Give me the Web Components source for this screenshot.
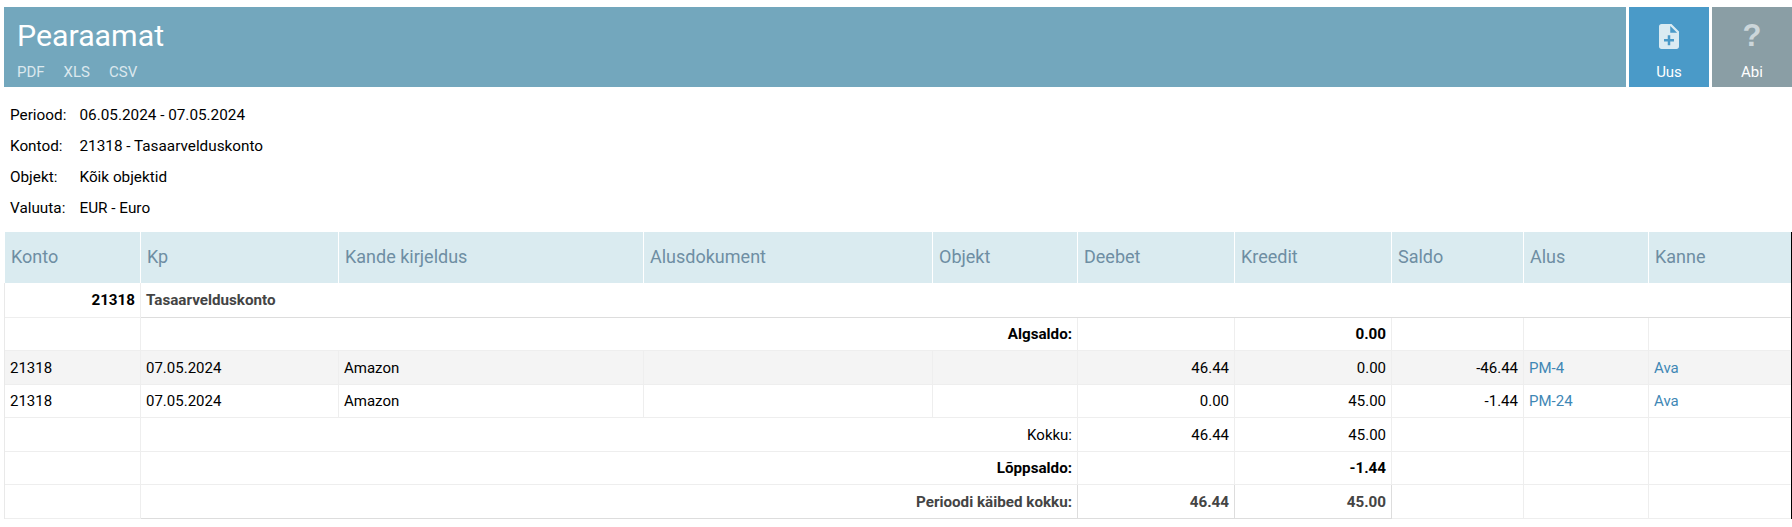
<!DOCTYPE html>
<html lang="et">
<head>
<meta charset="utf-8">
<title>Pearaamat</title>
<style>
  html, body { margin: 0; background: #fff; }
  body { font-family: Roboto, "Liberation Sans", sans-serif; font-size: 14px; color: #000; }
</style>
</head>
<body>
<gl-page>
  <gl-topbar slot="top" heading="Pearaamat">
    <gl-export>PDF</gl-export>
    <gl-export>XLS</gl-export>
    <gl-export>CSV</gl-export>
    <gl-action slot="actions" kind="new" label="Uus">
      <svg width="20" height="25" viewBox="4 2 16 20" fill="#daebf2"><path d="M14 2H6c-1.1 0-1.99.9-1.99 2L4 20c0 1.1.89 2 1.99 2H18c1.1 0 2-.9 2-2V8l-6-6zm2 14h-3v3h-2v-3H8v-2h3v-3h2v3h3v2zm-3-7V3.5L18.5 9H13z"/></svg>
    </gl-action>
    <gl-action slot="actions" kind="help" label="Abi"><span>?</span></gl-action>
  </gl-topbar>

  <gl-filters>
    <gl-filter label="Periood:">06.05.2024 - 07.05.2024</gl-filter>
    <gl-filter label="Kontod:">21318 - Tasaarvelduskonto</gl-filter>
    <gl-filter label="Objekt:">Kõik objektid</gl-filter>
    <gl-filter label="Valuuta:">EUR - Euro</gl-filter>
  </gl-filters>

  <gl-table>
    <gl-row head>
      <gl-th>Konto</gl-th><gl-th>Kp</gl-th><gl-th>Kande kirjeldus</gl-th><gl-th>Alusdokument</gl-th><gl-th>Objekt</gl-th>
      <gl-th>Deebet</gl-th><gl-th>Kreedit</gl-th><gl-th>Saldo</gl-th><gl-th>Alus</gl-th><gl-th last>Kanne</gl-th>
    </gl-row>

    <gl-row height="35">
      <gl-td right bold>21318</gl-td>
      <gl-td span="9" bold dim strong nosep>Tasaarvelduskonto</gl-td>
    </gl-row>

    <gl-row height="33">
      <gl-td></gl-td>
      <gl-td span="4" right bold>Algsaldo:</gl-td>
      <gl-td></gl-td>
      <gl-td right bold>0.00</gl-td>
      <gl-td></gl-td><gl-td></gl-td><gl-td nosep></gl-td>
    </gl-row>

    <gl-row height="34" striped>
      <gl-td>21318</gl-td><gl-td>07.05.2024</gl-td><gl-td>Amazon</gl-td><gl-td></gl-td><gl-td></gl-td>
      <gl-td right>46.44</gl-td><gl-td right>0.00</gl-td><gl-td right>-46.44</gl-td>
      <gl-td link>PM-4</gl-td><gl-td link nosep>Ava</gl-td>
    </gl-row>

    <gl-row height="33">
      <gl-td>21318</gl-td><gl-td>07.05.2024</gl-td><gl-td>Amazon</gl-td><gl-td></gl-td><gl-td></gl-td>
      <gl-td right>0.00</gl-td><gl-td right>45.00</gl-td><gl-td right>-1.44</gl-td>
      <gl-td link>PM-24</gl-td><gl-td link nosep>Ava</gl-td>
    </gl-row>

    <gl-row height="34">
      <gl-td></gl-td>
      <gl-td span="4" right>Kokku:</gl-td>
      <gl-td right>46.44</gl-td><gl-td right>45.00</gl-td>
      <gl-td></gl-td><gl-td></gl-td><gl-td nosep></gl-td>
    </gl-row>

    <gl-row height="33">
      <gl-td></gl-td>
      <gl-td span="4" right bold>Lõppsaldo:</gl-td>
      <gl-td></gl-td>
      <gl-td right bold>-1.44</gl-td>
      <gl-td></gl-td><gl-td></gl-td><gl-td nosep></gl-td>
    </gl-row>

    <gl-row height="34">
      <gl-td></gl-td>
      <gl-td span="4" right bold dim strong>Perioodi käibed kokku:</gl-td>
      <gl-td right bold dim strong>46.44</gl-td>
      <gl-td right bold dim strong>45.00</gl-td>
      <gl-td></gl-td><gl-td></gl-td><gl-td nosep></gl-td>
    </gl-row>
  </gl-table>
</gl-page>

<script>
// Pisike abi: iga klass saab oma shadow rooti ühe reaga
class Base extends HTMLElement {
  constructor() {
    super();
    this.attachShadow({ mode: 'open' });
  }
  connectedCallback() {
    this.render();
  }
}

class GlPage extends Base {
  render() {
    this.shadowRoot.innerHTML = `
      <style>
        :host { display: block; padding-top: 7px; }
      </style>
      <slot name="top"></slot>
      <slot></slot>
    `;
  }
}

class GlTopbar extends Base {
  render() {
    const heading = this.getAttribute('heading') || '';
    this.shadowRoot.innerHTML = `
      <style>
        :host { display: flex; height: 80px; margin-left: 4px; }
        .bar {
          flex: 1;
          background: #73a7bd;
          padding: 0 0 0 13px;
          display: flex;
          flex-direction: column;
          box-sizing: border-box;
        }
        h1 {
          margin: 0;
          padding-top: 11px;
          font-size: 30.3px;
          line-height: 36px;
          font-weight: 400;
          color: #fff;
        }
        .links { display: flex; gap: 19px; margin-top: 10px; }
      </style>
      <div class="bar">
        <h1>${heading}</h1>
        <div class="links"><slot></slot></div>
      </div>
      <slot name="actions"></slot>
    `;
  }
}

class GlExport extends Base {
  render() {
    this.shadowRoot.innerHTML = `
      <style>
        :host { display: block; font-size: 15px; line-height: 16px; color: #dbe8ee; }
      </style>
      <slot></slot>
    `;
  }
}

class GlAction extends Base {
  render() {
    const label = this.getAttribute('label') || '';
    this.shadowRoot.innerHTML = `
      <style>
        :host {
          display: flex;
          flex-direction: column;
          align-items: center;
          width: 80px;
          height: 80px;
          margin-left: 3px;
          background: #4a9ac8;
          color: #fff;
          box-sizing: border-box;
        }
        :host([kind="help"]) { background: #8a9ea5; }
        .icon {
          height: 25px;
          margin-top: 17px;
          display: flex;
          align-items: center;
          justify-content: center;
        }
        ::slotted(span) {
          font-family: "Liberation Sans", sans-serif;
          font-weight: 700;
          font-size: 31px;
          line-height: 23px;
          padding-bottom: 2px;
          color: #ccd6da;
        }
        .label { margin-top: 15px; font-size: 15px; line-height: 16px; }
      </style>
      <div class="icon"><slot></slot></div>
      <div class="label">${label}</div>
    `;
  }
}

class GlFilters extends Base {
  render() {
    this.shadowRoot.innerHTML = `
      <style>
        :host { display: block; padding: 13px 0 8px 10px; }
      </style>
      <slot></slot>
    `;
  }
}

class GlFilter extends Base {
  render() {
    const label = this.getAttribute('label') || '';
    this.shadowRoot.innerHTML = `
      <style>
        :host {
          display: grid;
          grid-template-columns: 69.5px 1fr;
          height: 31px;
          line-height: 31px;
          font-size: 15.3px;
          color: #000;
        }
      </style>
      <span>${label}</span>
      <span><slot></slot></span>
    `;
  }
}

class GlTable extends Base {
  render() {
    this.shadowRoot.innerHTML = `
      <style>
        :host {
          display: block;
          margin-left: 4px;
          border-right: 1px solid #000;
          --cols: 136px 198px 305px 289px 145px 157px 157px 132px 125px 142px;
        }
      </style>
      <slot></slot>
    `;
  }
}

class GlRow extends Base {
  render() {
    const h = this.getAttribute('height');
    if (h) this.style.height = h + 'px';
    this.shadowRoot.innerHTML = `
      <style>
        :host {
          display: grid;
          grid-template-columns: var(--cols);
          border-left: 1px solid #e9e9e9;
          box-sizing: border-box;
        }
        :host([head]) { height: 51px; border-left-color: transparent; }
        :host([striped]) { background: #f4f4f4; }
      </style>
      <slot></slot>
    `;
  }
}

class GlTh extends Base {
  render() {
    this.shadowRoot.innerHTML = `
      <style>
        :host {
          display: flex;
          align-items: center;
          box-sizing: border-box;
          padding: 0 0 2px 6px;
          background: #daebf0;
          border-right: 1px solid #fff;
          font-size: 18px;
          color: #6e8ea3;
        }
        :host([last]) { border-right: 0; }
      </style>
      <slot></slot>
    `;
  }
}

class GlTd extends Base {
  render() {
    const span = this.getAttribute('span');
    if (span) this.style.gridColumn = 'span ' + span;
    this.shadowRoot.innerHTML = `
      <style>
        :host {
          display: flex;
          align-items: center;
          box-sizing: border-box;
          min-width: 0;
          padding: 0 5px;
          border-right: 1px solid #eeeeee;
          border-bottom: 1px solid #eeeeee;
          font-size: 15px;
          color: #000;
        }
        :host([right]) { justify-content: flex-end; }
        :host([bold]) { font-weight: 700; font-size: 15.2px; }
        :host([dim]) { color: #444; }
        :host([link]) { color: #3f87b5; }
        :host([strong]) { border-right-color: #dddddd; border-bottom-color: #dddddd; }
        :host([nosep]) { border-right-color: transparent; }
      </style>
      <slot></slot>
    `;
  }
}

customElements.define('gl-page', GlPage);
customElements.define('gl-topbar', GlTopbar);
customElements.define('gl-export', GlExport);
customElements.define('gl-action', GlAction);
customElements.define('gl-filters', GlFilters);
customElements.define('gl-filter', GlFilter);
customElements.define('gl-table', GlTable);
customElements.define('gl-row', GlRow);
customElements.define('gl-th', GlTh);
customElements.define('gl-td', GlTd);
</script>
</body>
</html>
